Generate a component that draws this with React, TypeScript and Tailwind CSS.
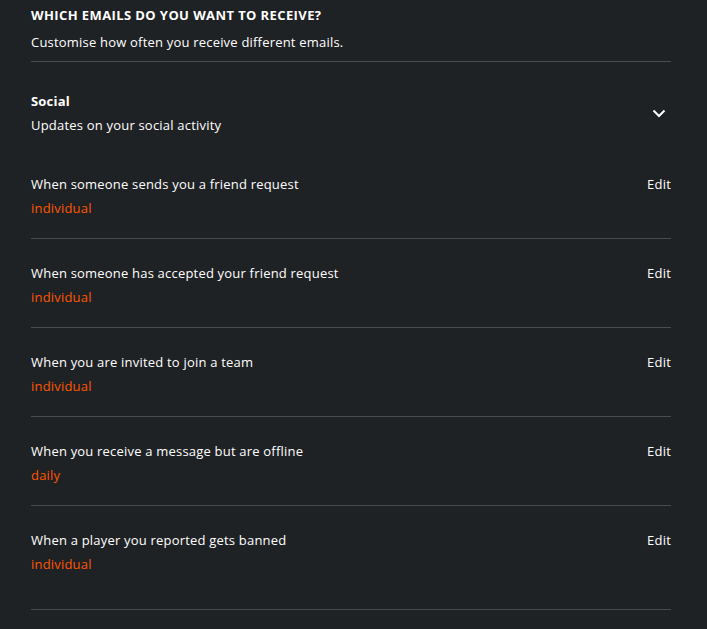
const rows = [
  { label: 'When someone sends you a friend request', value: 'individual' },
  { label: 'When someone has accepted your friend request', value: 'individual' },
  { label: 'When you are invited to join a team', value: 'individual' },
  { label: 'When you receive a message but are offline', value: 'daily' },
  { label: 'When a player you reported gets banned', value: 'individual' },
]

export default function App() {
  return (
    <div
      className="min-h-[629px] w-full bg-[#1f2224] text-[13px] tracking-[0.2px] text-white"
      style={{ fontFamily: '"Open Sans", "Liberation Sans", sans-serif' }}
    >
      <div className="ml-[31px] w-[640px] pt-[3px]">
        <header className="border-b border-[#4a4d50] pb-[7px]">
          <h1 className="text-[13px] font-bold uppercase leading-6 tracking-[0.4px]">
            Which emails do you want to receive?
          </h1>
          <p className="mt-[3px] leading-6">Customise how often you receive different emails.</p>
        </header>

        <section>
          <div className="flex items-center justify-between pt-[27px] pb-[13px]">
            <div>
              <h2 className="font-bold leading-6">Social</h2>
              <p className="leading-6">Updates on your social activity</p>
            </div>
            <svg width="14" height="9" viewBox="0 0 14 9" className="mr-[5px]" fill="none">
              <path d="M1.5 1.5 L7 7 L12.5 1.5" stroke="white" strokeWidth="2" />
            </svg>
          </div>

          {rows.map((row, i) => (
            <div
              key={row.label}
              className={
                'flex justify-between border-b border-[#4a4d50] pt-[22px] ' +
                (i === rows.length - 1 ? 'pb-[33px]' : 'pb-[18px]')
              }
            >
              <div>
                <p className="leading-6">{row.label}</p>
                <p className="leading-6 text-[#ff5500]">{row.value}</p>
              </div>
              <button className="h-6 leading-6">Edit</button>
            </div>
          ))}
        </section>
      </div>
    </div>
  )
}
